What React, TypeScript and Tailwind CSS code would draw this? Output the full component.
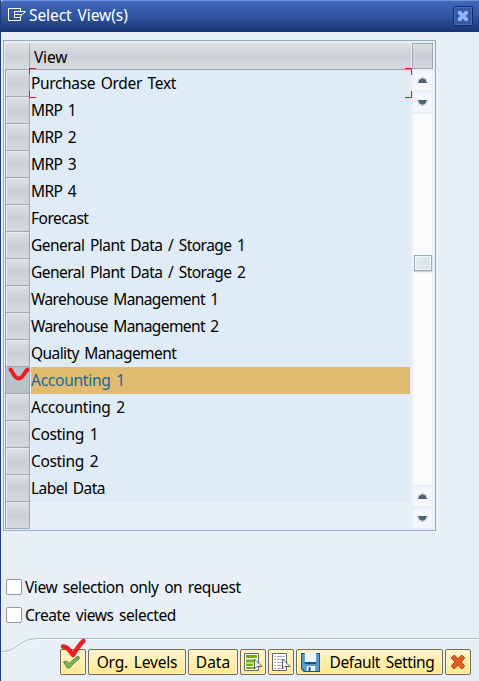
import React from "react";

const rows: { text: string; tracking: string }[] = [
  { text: "Purchase Order Text", tracking: "tracking-[-0.35px]" },
  { text: "MRP 1", tracking: "tracking-[-0.6px]" },
  { text: "MRP 2", tracking: "tracking-[-0.6px]" },
  { text: "MRP 3", tracking: "tracking-[-0.6px]" },
  { text: "MRP 4", tracking: "tracking-[-0.6px]" },
  { text: "Forecast", tracking: "tracking-[-0.5px]" },
  { text: "General Plant Data / Storage 1", tracking: "tracking-[-0.52px]" },
  { text: "General Plant Data / Storage 2", tracking: "tracking-[-0.52px]" },
  { text: "Warehouse Management 1", tracking: "tracking-[-0.61px]" },
  { text: "Warehouse Management 2", tracking: "tracking-[-0.61px]" },
  { text: "Quality Management", tracking: "tracking-[-0.58px]" },
  { text: "Accounting 1", tracking: "tracking-[-0.25px]" },
  { text: "Accounting 2", tracking: "tracking-[-0.25px]" },
  { text: "Costing 1", tracking: "tracking-[-0.33px]" },
  { text: "Costing 2", tracking: "tracking-[-0.33px]" },
  { text: "Label Data", tracking: "tracking-[-0.55px]" },
  { text: "", tracking: "" },
];

function Arrow({ down = false }: { down?: boolean }) {
  return (
    <div className="flex h-[19px] w-[19px] shrink-0 items-center justify-center bg-[#f3f6fa]">
      <svg width="11" height="7" viewBox="0 0 11 7" shapeRendering="crispEdges" className={"-ml-px " + (down ? "rotate-180" : "")}>
        <path d="M4 0H7V1H9V2H10V4H11V5H0V4H1V2H2V1H4Z" fill="#cbd2d8" />
        <path d="M5 1H6V2H8V3H9V5H10V6H1V5H2V3H3V2H5Z" fill="#4f6270" />
      </svg>
    </div>
  );
}

function Check({ label }: { label: string }) {
  return (
    <div className="flex h-7 items-center">
      <span className="h-4 w-4 rounded-[2px] border border-[#94989c] bg-white" />
      <span className="ml-[3px] tracking-[-0.43px]">{label}</span>
    </div>
  );
}

function Button({ className, children }: { className: string; children: React.ReactNode }) {
  return (
    <button className={"flex h-[26px] shrink-0 items-center justify-center rounded-[2px] border border-[#716d58] bg-gradient-to-b from-[#fff5cd] to-[#ffe98f] shadow-[inset_0_0_0_1px_#fff3bf] whitespace-nowrap [word-spacing:2px] " + className}>
      {children}
    </button>
  );
}

function ListIcon({ green = false }: { green?: boolean }) {
  return (
    <svg width="20" height="20" viewBox="0 0 20 20">
      <path d="M1.5 1.5H15.5V18.5H1.5Z" fill="#fff" stroke="#62666a" />
      {green ? (
        <path d="M3 3H14V6H3ZM3 7.5H11V10.5H3ZM3 11.5H10V14H3ZM3 15H11V17H3Z" fill="#6fad16" />
      ) : (
        <path d="M3 4.5H5M6 4.5H14M3 7.5H5M6 7.5H14M3 10.5H5M6 10.5H11M3 13.5H5M6 13.5H11M3 16.5H5M6 16.5H11" stroke="#a9adb1" />
      )}
      <path d="M11.5 7V17L14 14.5H19L11.5 7Z" fill="#f1f2f4" stroke="#5d6064" />
    </svg>
  );
}

export default function App() {
  return (
    <div className="relative flex h-[681px] w-[479px] flex-col overflow-hidden border-l border-[#263c79] bg-[#e8eff6] font-['Noto_Sans',sans-serif] text-[15.5px] leading-[27px] text-black [word-spacing:2px]">
      <header className="flex h-8 shrink-0 items-center rounded-tl-[3px] border-t border-[#6f93d6] bg-gradient-to-b from-[#4168bb] via-[#30549f] to-[#1a3474] pl-[6px] pr-[5px] text-white">
        <svg width="20" height="16" viewBox="0 0 20 16" fill="none" stroke="#fff" className="-mt-1">
          <path d="M13.5 4V1.5H1.5V13.5H13.5V11M7.5 4.5H18.5L15.5 7.5H11.5M7.5 4.5V10.5H13.5L14.5 7.5M8 7.5H12" />
        </svg>
        <span className="ml-[2px] -mt-[3px] tracking-[-0.07px]">Select View(s)</span>
        <div className="-mt-px ml-auto mr-px flex h-5 w-5 items-center justify-center rounded-[2px] border border-[#142d68] bg-[#365aa5] shadow-[inset_0_0_0_1px_#4a6db5]">
          <svg width="12" height="12" viewBox="0 0 12 12" className="shrink-0"><path d="M1 1H4L6 3.5L8 1H11V4L8.5 6L11 8V11H8L6 8.5L4 11H1V8L3.5 6L1 4Z" fill="#8fb8ff" /></svg>
        </div>
      </header>

      <main className="ml-[2px] mt-2 flex h-[491px] w-[433px] shrink-0 border border-[#8fadc8] pl-px pt-[2px]">
        <div className="w-[406px] shrink-0">
          <div className="flex h-[27px] border-b border-[#98a5b2] bg-gradient-to-b from-[#dde1e4] via-[#cdd2d8] to-[#d7dbe0]">
            <div className="w-[25px] shrink-0 border-r border-[#a0abb6]" />
            <div className="pl-1 pt-px tracking-[-0.2px]">View</div>
          </div>
          {rows.map((row, i) => (
            <div key={i} className="flex h-[27px]">
              <div className={"w-[25px] shrink-0 border-b border-l border-r border-[#9ba6b1] " + (i === 11 ? "bg-[#b9c1c9]" : "bg-gradient-to-b from-[#dce0e5] via-[#cbd0d7] to-[#d5d9df] shadow-[inset_1px_1px_0_#e8ebee]")} />
              <div className={"ml-px mr-px flex-1 whitespace-pre " + row.tracking + (i === 11 ? " bg-[#e1bb70] text-[#16699b]" : i === 16 ? "" : " bg-[#dfebf5]")}>
                {row.text}
              </div>
            </div>
          ))}
        </div>
        <div className="ml-px flex w-[21px] flex-col items-center">
          <div className="mb-[2px] h-[26px] w-full shrink-0 border border-[#9ba8b4] bg-gradient-to-b from-[#d8dde1] via-[#c9cfd7] to-[#d4d8de]" />
          <Arrow />
          <div className="h-[3px] shrink-0" />
          <Arrow down />
          <div className="mb-[2px] mt-[2px] flex w-[19px] flex-1 flex-col bg-[#fafbfd]">
            <div className="ml-px mt-[141px] h-4 w-[18px] border border-[#98abbc] bg-gradient-to-r from-[#e4edf5] to-[#d7e2ed] shadow-[inset_0_0_0_1px_#f4f8fb,0_1px_1px_#ccd3da]" />
          </div>
          <Arrow />
          <div className="h-[3px] shrink-0" />
          <Arrow down />
          <div className="h-[2px] shrink-0" />
        </div>
      </main>

      <section className="ml-[5px] mt-[42px] shrink-0">
        <Check label="View selection only on request" />
        <Check label="Create views selected" />
      </section>

      <footer className="relative mt-[8px] h-[44px] shrink-0">
        <svg width="479" height="20" viewBox="0 0 479 20" className="absolute left-0 top-0" fill="none">
          <path d="M0 15.5C17 16 18 2.5 36 2.5H479" stroke="#fff" />
          <path d="M0 14.5C17 15 18 1.5 36 1.5H479" stroke="#aab9c8" />
        </svg>
        <div className="relative flex gap-[2px] pl-[59px] pt-[12px]">
          <Button className="w-[26px]">
            <svg width="18" height="18" viewBox="0 0 18 18" className="-ml-1"><path d="M1.5 9L4.5 8L7 10.5L14.5 4L17 3.5V6L12 10L7.5 15H5.5Z" fill="#79b944" stroke="#61775a" /></svg>
          </Button>
          <Button className="w-[98px] tracking-[-0.18px]">Org. Levels</Button>
          <Button className="w-[50px]">Data</Button>
          <Button className="w-[26px]"><ListIcon green /></Button>
          <Button className="w-[26px]"><ListIcon /></Button>
          <Button className="w-[147px] tracking-[-0.4px]">
            <svg width="19" height="19" viewBox="0 0 20 19" preserveAspectRatio="none" className="-ml-1 mr-[10px] shrink-0">
              <path d="M0 0H20V19H3L0 16Z" fill="#0c568e" />
              <path d="M1 1H4V10H16V1H19V18H4L1 15Z" fill="#5d99c6" />
              <path d="M4 0H16V9H4Z" fill="#eff5fb" /><path d="M4 9H16V11H4Z" fill="#0c568e" />
              <path d="M6 13H15V18H6Z" fill="#e7eff5" /><path d="M8 14H10V18H8Z" fill="#0c568e" />
            </svg>
            <span>Default Setting</span>
          </Button>
          <Button className="w-[26px]">
            <svg width="16" height="16" viewBox="0 0 16 16" className="-ml-px"><path d="M1.5 3.5L3.5 1.5H5L8 5L11 1.5H12.5L14.5 3.5V4.5L11 8L14.5 11.5V12.5L12.5 14.5H11L8 11L5 14.5H3.5L1.5 12.5V11.5L5 8L1.5 4.5Z" fill="#e45a20" stroke="#b54a20" /></svg>
          </Button>
        </div>
      </footer>

      <svg width="479" height="681" className="pointer-events-none absolute -left-px top-0" fill="none">
        <path d="M29.5 74V68.5H36M29.5 91V97.5H36M405 68.5H411.5V75M411.5 91V97.5H405" stroke="#e01018" />
        <path d="M10.500 369.500C13 372 14 378.500 19 378.500C23 378 24 373 27.500 369.500" stroke="#ed1c24" strokeWidth="4" strokeLinecap="round" />
        <path d="M63 646.500C69 647 70 652 73 655C75.500 651 79 645 83.500 641" stroke="#ed1c24" strokeWidth="4.500" strokeLinecap="round" strokeLinejoin="round" />
      </svg>
    </div>
  );
}
